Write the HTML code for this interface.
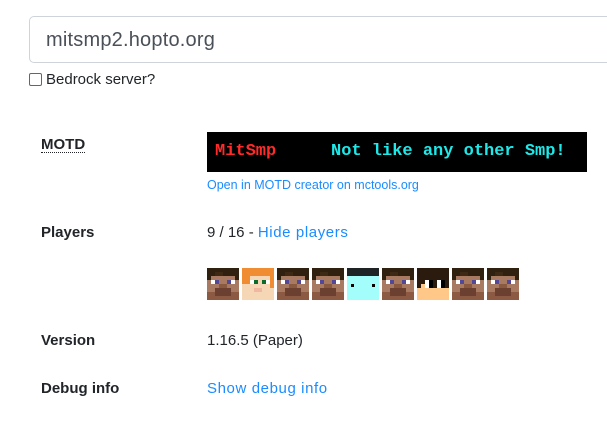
<!DOCTYPE html>
<html><head><meta charset="utf-8"><style>
body{margin:0;width:607px;height:430px;background:#fff;font-family:"Liberation Sans",sans-serif;color:#212529;position:relative;overflow:hidden}
.a{position:absolute;white-space:nowrap}
.inp{left:29px;top:16px;width:600px;height:47px;border:1px solid #ced4da;border-radius:5px;box-sizing:border-box}
.lbl{font-weight:bold;font-size:15px;left:41px}
.val{font-size:15px;left:207px}
a{color:#1a8cff;text-decoration:none;letter-spacing:0.6px}
.m{font-family:'Liberation Mono',monospace;font-size:17px;font-weight:bold}
</style></head><body>
<div class="a inp"></div>
<div class="a" style="left:46px;top:29px;font-size:20px;color:#495057;letter-spacing:0.2px">mitsmp2.hopto.org</div>
<div class="a" style="left:29px;top:73px;width:11px;height:11px;border:1px solid #666;border-radius:2px"></div>
<div class="a" style="left:46px;top:71px;font-size:15px">Bedrock server?</div>
<div class="a lbl" style="top:137px;border-bottom:1px dotted #212529;line-height:15px">MOTD</div>
<div class="a" style="left:207px;top:132px;width:380px;height:40px;background:#000"></div>
<div class="a m" style="left:215px;top:142px;color:#ff2a2a">MitSmp</div>
<div class="a m" style="left:331px;top:142px;color:#1ee8e8">Not like any other Smp!</div>
<div class="a" style="left:207px;top:178px;font-size:12.5px"><a style="letter-spacing:0">Open in MOTD creator on mctools.org</a></div>
<div class="a lbl" style="top:224px">Players</div>
<div class="a val" style="top:224px">9 / 16 - <a>Hide players</a></div>
<svg class="a" style="left:207px;top:268px" width="320" height="32" viewBox="0 0 320 32" shape-rendering="crispEdges">
<defs>
<g id="s">
<rect width="32" height="32" fill="#a97a62"/>
<rect width="32" height="8" fill="#2f200f"/>
<rect y="8" width="4" height="4" fill="#2f200f"/><rect x="28" y="8" width="4" height="4" fill="#2f200f"/>
<rect x="8" y="4" width="8" height="4" fill="#3e2a14"/>
<rect x="4" y="12" width="4" height="4" fill="#fff"/><rect x="8" y="12" width="4" height="4" fill="#52489a"/>
<rect x="20" y="12" width="4" height="4" fill="#52489a"/><rect x="24" y="12" width="4" height="4" fill="#fff"/>
<rect x="12" y="16" width="8" height="4" fill="#8a5a40"/>
<rect x="8" y="20" width="16" height="4" fill="#6b4030"/>
<rect y="24" width="32" height="8" fill="#8c5a43"/>
<rect x="8" y="24" width="16" height="4" fill="#6b4030"/>
</g>
</defs>
<use href="#s"/>
<g transform="translate(35 0)">
<rect width="32" height="32" fill="#f5d7b5"/>
<rect width="32" height="8" fill="#f08d32"/>
<rect y="8" width="8" height="8" fill="#f08d32"/><rect x="28" y="8" width="4" height="12" fill="#f08d32"/>
<rect x="8" y="12" width="4" height="4" fill="#fff"/><rect x="12" y="12" width="4" height="4" fill="#0a6b2a"/>
<rect x="20" y="12" width="4" height="4" fill="#0a6b2a"/><rect x="24" y="12" width="4" height="4" fill="#fff"/>
<rect x="12" y="20" width="8" height="4" fill="#f0b8a0"/>
</g>
<use href="#s" x="70"/>
<use href="#s" x="105"/>
<g transform="translate(140 0)">
<rect width="32" height="32" fill="#a2fdfb"/>
<rect width="32" height="8" fill="#1e2326"/>
<rect x="4" y="16" width="3" height="3" fill="#000"/><rect x="25" y="16" width="3" height="3" fill="#000"/>
</g>
<use href="#s" x="175"/>
<g transform="translate(210 0)">
<rect width="32" height="32" fill="#ffc788"/>
<rect width="32" height="20" fill="#2a1b0e"/>
<rect x="8" y="12" width="4" height="8" fill="#fff"/><rect x="12" y="12" width="4" height="8" fill="#000"/>
<rect x="20" y="12" width="4" height="8" fill="#fff"/><rect x="24" y="12" width="4" height="8" fill="#000"/>
<rect x="4" y="16" width="4" height="4" fill="#ffc788"/>
</g>
<use href="#s" x="245"/>
<use href="#s" x="280"/>
</svg>
<div class="a lbl" style="top:332px">Version</div>
<div class="a val" style="top:332px">1.16.5 (Paper)</div>
<div class="a lbl" style="top:380px">Debug info</div>
<div class="a val" style="top:380px"><a>Show debug info</a></div>
</body></html>
